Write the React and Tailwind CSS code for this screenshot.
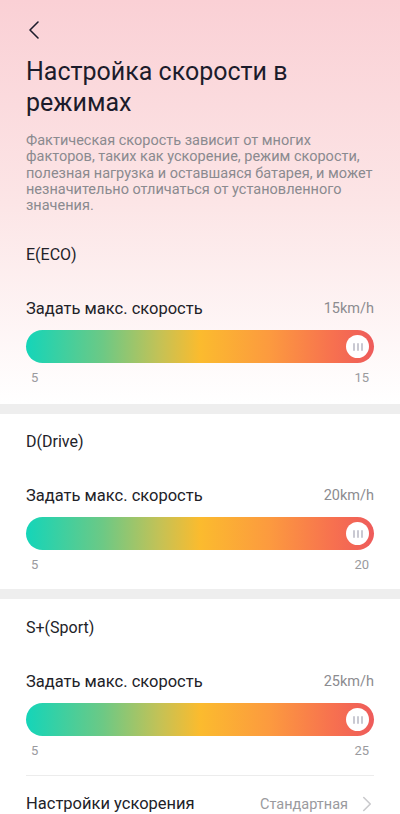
import { ChevronLeft, ChevronRight } from 'lucide-react'

function Slider({ min, max, value }) {
  return (
    <div>
      <div className="flex items-center justify-between">
        <span className="text-[16.5px] leading-6 text-[#222228]">Задать макс. скорость</span>
        <span className="text-[14.5px] leading-6 text-[#8c8c90]">{value}km/h</span>
      </div>
      <div className="mt-[9px] flex h-[33px] items-center justify-end rounded-full bg-[linear-gradient(90deg,#14d5b9_0%,#6cc985_22%,#c2c257_38%,#fbbb2e_50%,#fc9a3f_70%,#f7714f_88%,#ee5b5b_100%)] pr-[5px]">
        <div className="flex h-[23px] w-[23px] items-center justify-center gap-[2px] rounded-full bg-white">
          <span className="h-[8px] w-[2px] rounded-full bg-[#c9c9d2]" />
          <span className="h-[8px] w-[2px] rounded-full bg-[#c9c9d2]" />
          <span className="h-[8px] w-[2px] rounded-full bg-[#c9c9d2]" />
        </div>
      </div>
      <div className="mt-[7px] flex justify-between px-[5px] text-[13px] leading-4 text-[#9a9a9e]">
        <span>{min}</span>
        <span>{max}</span>
      </div>
    </div>
  )
}

export default function App() {
  return (
    <div className="flex min-h-[814px] w-[400px] flex-col gap-[10px] overflow-hidden bg-[#eeeeee] font-['Roboto',sans-serif]">
      <div className="bg-[linear-gradient(180deg,#fad0d5_0%,#fce5e6_50%,#ffffff_100%)] px-[26px] pb-[18px] pt-[14px]">
        <ChevronLeft className="-ml-[8px] h-8 w-8 text-[#1c1c2b]" strokeWidth={1.2} />
        <h1 className="mt-[10px] text-[25px] leading-[31px] text-[#1c1c2b]">Настройка скорости в режимах</h1>
        <p className="mt-[15px] text-[14.5px] leading-[16.3px] text-[#8a8a8f]">
          Фактическая скорость зависит от многих факторов, таких как ускорение, режим скорости, полезная нагрузка и оставшаяся батарея, и может незначительно отличаться от установленного значения.
        </p>
        <div className="mt-[29px] text-[16px] leading-6 text-[#222228]">E(ECO)</div>
        <div className="mt-[30px]">
          <Slider min={5} max={15} value={15} />
        </div>
      </div>

      <div className="bg-white px-[26px] pb-4 pt-4">
        <div className="text-[16px] leading-6 text-[#222228]">D(Drive)</div>
        <div className="mt-[30px]">
          <Slider min={5} max={20} value={20} />
        </div>
      </div>

      <div className="flex-1 bg-white px-[26px] pt-[17px]">
        <div className="text-[16px] leading-6 text-[#222228]">S+(Sport)</div>
        <div className="mt-[30px] border-b border-[#ececec] pb-4">
          <Slider min={5} max={25} value={25} />
        </div>
        <div className="flex h-14 items-center justify-between">
          <span className="text-[16.5px] text-[#222228]">Настройки ускорения</span>
          <span className="flex items-center gap-[6px] text-[14.5px] text-[#9a9a9e]">
            Стандартная
            <ChevronRight className="-mr-[6px] h-[26px] w-[26px] text-[#cacacd]" strokeWidth={1.5} />
          </span>
        </div>
      </div>
    </div>
  )
}
